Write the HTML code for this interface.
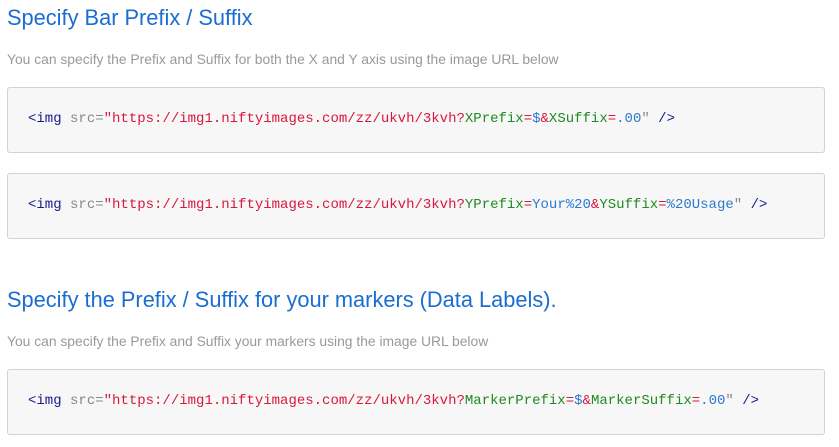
<!DOCTYPE html>
<html><head><style>
body{margin:0;background:#fff;width:839px;height:447px;overflow:hidden;font-family:"Liberation Sans",sans-serif;}
h2{position:absolute;left:7px;margin:0;font-weight:normal;color:#1a6dd1;font-size:21.8px;line-height:24px;white-space:nowrap;}
p{position:absolute;left:7px;margin:0;color:#999;font-size:13.85px;line-height:16px;white-space:nowrap;}
.box{position:absolute;left:7px;width:818px;height:64px;background:#f7f7f7;border:1px solid #d2d2d2;border-radius:3px;box-sizing:border-box;}
.box code{position:absolute;left:20px;top:23px;font-family:"Liberation Mono",monospace;font-size:14px;line-height:17px;white-space:pre;color:#1a1a8c;}
.a{color:#888}.s{color:#d8173e}.k{color:#1f8a1f}.v{color:#2a7bd0}.e{color:#d8173e}
</style></head><body>
<h2 style="top:6px">Specify Bar Prefix / Suffix</h2>
<p style="top:51px">You can specify the Prefix and Suffix for both the X and Y axis using the image URL below</p>
<div class="box" style="top:87px;height:66px"><code>&lt;img <span class="a">src=</span><span class="s">"https://img1.niftyimages.com/zz/ukvh/3kvh?</span><span class="k">XPrefix</span><span class="s">=</span><span class="v">$</span><span class="e">&amp;</span><span class="k">XSuffix</span><span class="s">=</span><span class="v">.00</span><span class="a">"</span> /&gt;</code></div>
<div class="box" style="top:173px;height:66px"><code>&lt;img <span class="a">src=</span><span class="s">"https://img1.niftyimages.com/zz/ukvh/3kvh?</span><span class="k">YPrefix</span><span class="s">=</span><span class="v">Your%20</span><span class="e">&amp;</span><span class="k">YSuffix</span><span class="s">=</span><span class="v">%20Usage</span><span class="a">"</span> /&gt;</code></div>
<h2 style="top:288px">Specify the Prefix / Suffix for your markers (Data Labels).</h2>
<p style="top:333px">You can specify the Prefix and Suffix your markers using the image URL below</p>
<div class="box" style="top:369px;height:66px"><code>&lt;img <span class="a">src=</span><span class="s">"https://img1.niftyimages.com/zz/ukvh/3kvh?</span><span class="k">MarkerPrefix</span><span class="s">=</span><span class="v">$</span><span class="e">&amp;</span><span class="k">MarkerSuffix</span><span class="s">=</span><span class="v">.00</span><span class="a">"</span> /&gt;</code></div>
</body></html>
